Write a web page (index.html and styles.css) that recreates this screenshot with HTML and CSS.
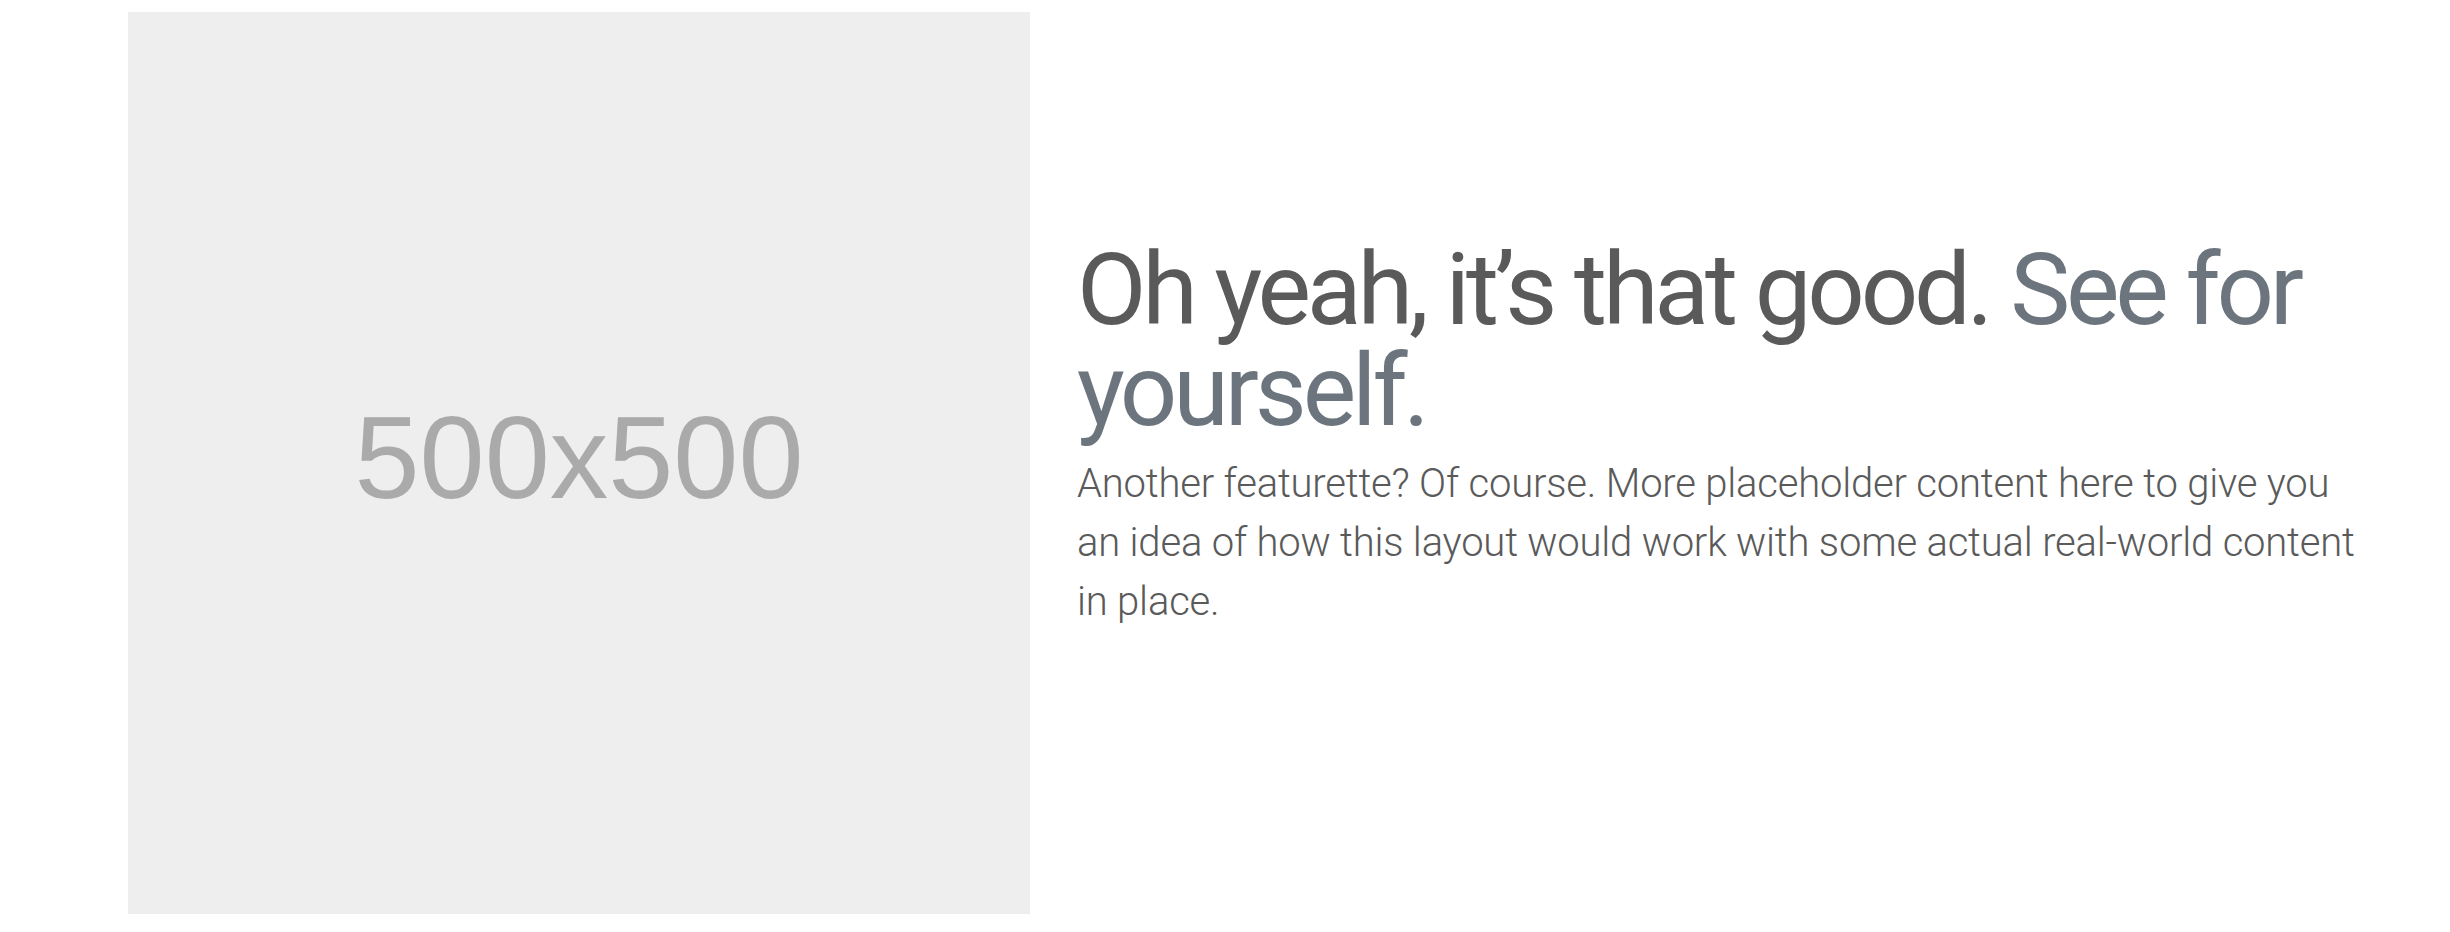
FILE: index.html
```html
<!DOCTYPE html>
<html lang="en">
<head>
<meta charset="utf-8">
<title>Featurette</title>
<link rel="stylesheet" href="styles.css">
</head>
<body>
<main class="featurette">
  <div class="feature-media">
    <svg class="placeholder" width="902" height="902" viewBox="0 0 902 902" role="img" aria-label="Placeholder: 500x500">
      <rect width="100%" height="100%" fill="#eeeeee"></rect>
      <text x="50%" y="50%" fill="#aaaaaa" dy=".3em" text-anchor="middle" class="ph-text">500x500</text>
    </svg>
  </div>
  <div class="feature-text">
    <h2 class="featurette-heading">Oh yeah, it’s that good. <span class="muted">See for yourself.</span></h2>
    <p class="lead">Another featurette? Of course. More placeholder content here to give you an idea of how this layout would work with some actual real-world content in place.</p>
  </div>
</main>
</body>
</html>
```
FILE: styles.css
```css
html, body {
  margin: 0;
  padding: 0;
  background: #fff;
}
body {
  color: #5a5a5a;
  font-family: Roboto, "Noto Sans", sans-serif;
}
.featurette {
  display: flex;
  align-items: center;
  padding: 12px 0 0 128px;
  gap: 47px;
}
.feature-media {
  flex: 0 0 902px;
  height: 902px;
}
.placeholder {
  display: block;
}
.ph-text {
  font-family: "Liberation Sans", Arial, sans-serif;
  font-size: 117px;
}
.feature-text {
  flex: 0 0 1282px;
  padding-bottom: 56px;
}
.featurette-heading {
  margin: 0 0 13px;
  font-size: 101px;
  font-weight: 400;
  line-height: 1;
  letter-spacing: -4.2px;
}
.muted {
  color: #6c757d;
}
.lead {
  margin: 0;
  font-size: 40px;
  line-height: 59px;
  font-weight: 300;
  letter-spacing: -0.2px;
}
```
